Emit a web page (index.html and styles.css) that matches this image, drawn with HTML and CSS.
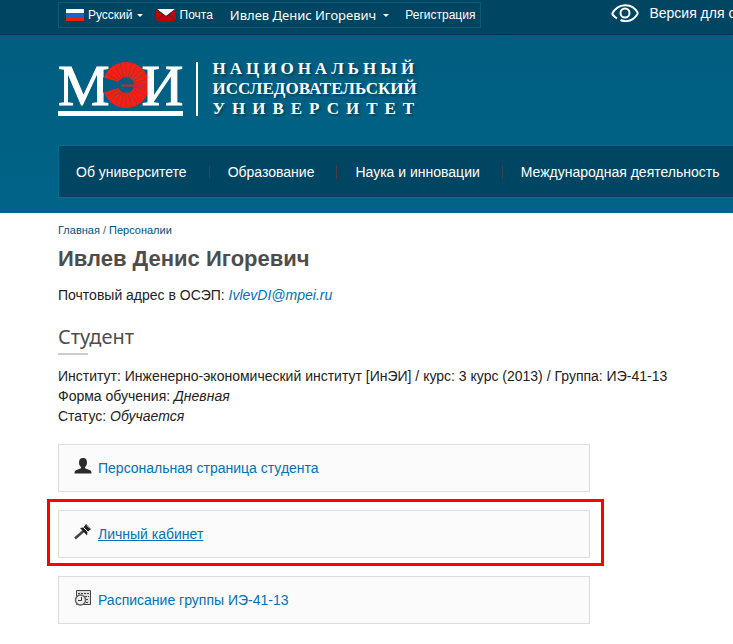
FILE: index.html
```html
<!DOCTYPE html>
<html lang="ru">
<head>
<meta charset="utf-8">
<title>Ивлев Денис Игоревич</title>
<link rel="stylesheet" href="styles.css">
</head>
<body>
<header class="header">
  <div class="topbar">
    <div class="userbar">
      <a class="lang" href="#">
        <svg class="flag" viewBox="0 0 18 12"><path fill="#fff" d="M0 0h18v4H0z"/><path fill="#1565c8" d="M0 4h18v4H0z"/><path fill="#f01c08" d="M0 8h18v4H0z"/></svg>
        Русский
        <svg class="caret" viewBox="0 0 6 3"><path fill="#fff" d="M0 0h6L3 3z"/></svg>
      </a>
      <a class="mail" href="#">
        <svg class="envelope" viewBox="0 0 20 12"><path fill="#c80000" d="M0 0h20v12H0z"/><path fill="#fff" d="M1 0h18l-9 7z"/><path fill="none" stroke="#08405f" d="M0 0l10 7.500L20 0M0 12l7-6M20 12l-7-6"/></svg>
        Почта
      </a>
      <a class="user" href="#">Ивлев Денис Игоревич
        <svg class="caret" viewBox="0 0 6 3"><path fill="#fff" d="M0 0h6L3 3z"/></svg>
      </a>
      <a class="register" href="#">Регистрация</a>
    </div>
    <a class="vision" href="#">
      <svg class="eye" viewBox="0 0 28 18"><g fill="none" stroke="#fff" stroke-width="2"><path d="M1 10C7-1.500 21-1.500 27 9M1 10q2.500 3 5 4.500M27 9C23 17 15 18.500 9.500 16"/><circle cx="14" cy="9" r="4.500"/></g></svg>
      Версия для слабовидящих
    </a>
  </div>
  <a class="brand" href="#">
    <span class="logo">
      <span class="logo-letter">М</span>
      <svg class="disc" viewBox="0 0 46 46" aria-label="Э">
        <circle cx="23" cy="23" r="15.500" fill="none" stroke="#ff1d12" stroke-width="15"/>
        <g stroke="#8a3a44" stroke-width=".8"><path id="ray" d="M23 0v15M23 31v15"/><use href="#ray" transform="rotate(15 23 23)"/><use href="#ray" transform="rotate(30 23 23)"/><use href="#ray" transform="rotate(45 23 23)"/><use href="#ray" transform="rotate(60 23 23)"/><use href="#ray" transform="rotate(75 23 23)"/><use href="#ray" transform="rotate(105 23 23)"/><use href="#ray" transform="rotate(120 23 23)"/><use href="#ray" transform="rotate(135 23 23)"/><use href="#ray" transform="rotate(150 23 23)"/><use href="#ray" transform="rotate(165 23 23)"/></g>
        <path d="M17 20.500L-1 15v16l18-5.500z" fill="#005f82"/>
        <path d="M30 22h16M30 25h16" stroke="#8a3a44"/>
        <path d="M18 23.500h28" stroke="#e02020" stroke-width="2"/>
      </svg>
      <span class="logo-letter">И</span>
    </span>
    <span class="wordmark">
      <span class="word-wide">НАЦИОНАЛЬНЫЙ</span>
      <span>ИССЛЕДОВАТЕЛЬСКИЙ</span>
      <span class="word-widest">УНИВЕРСИТЕТ</span>
    </span>
  </a>
  <nav class="nav">
    <a href="#">Об университете</a>
    <a href="#">Образование</a>
    <a href="#">Наука и инновации</a>
    <a href="#">Международная деятельность</a>
  </nav>
</header>
<main class="content">
  <div class="crumbs"><a href="#">Главная</a> / <a href="#">Персоналии</a></div>
  <h1>Ивлев Денис Игоревич</h1>
  <p>Почтовый адрес в ОСЭП: <a href="#"><em>IvlevDI@mpei.ru</em></a></p>
  <h2>Студент</h2>
  <p>Институт: Инженерно-экономический институт [ИнЭИ] / курс: 3 курс (2013) / Группа: ИЭ-41-13<br>
  Форма обучения: <em>Дневная</em><br>
  Статус: <em>Обучается</em></p>
  <div class="cards">
    <div class="card">
      <svg class="icon" viewBox="0 0 18 18"><path fill="#2b2b2b" d="M9 1c3 0 4 2 4 4.500 0 2-.8 3.500-2 4.500v1.200l5 2c1 .4 1.500 1.500 1.500 3.300H.5c0-1.800.5-2.900 1.500-3.300l5-2V10C5.800 9 5 7.500 5 5.500 5 3 6 1 9 1z"/></svg>
      <a href="#">Персональная страница студента</a>
    </div>
    <div class="card marked">
      <svg class="icon" viewBox="0 0 18 18"><path stroke="#444" stroke-width="2.500" d="M1 15.500L10 7.500"/><path fill="#222" d="M6 5l3.500-.5L12 1l5 5-3.500 3-.5 3.500z"/><path stroke="#fff" d="M9.500 4.500l4.500 4.500"/><path stroke="#888" d="M12.500 2.500l3 3"/></svg>
      <a class="current" href="#">Личный кабинет</a>
    </div>
    <div class="card">
      <svg class="icon" viewBox="0 0 18 18"><path fill="#ddd" stroke="#444" d="M2.500 1.500h14v14h-14z"/><path stroke="#444" stroke-dasharray="2 1" d="M4 4.500h11M11 7.500h4M12 10.500h3M12 13.500h3"/><circle cx="6.500" cy="11" r="5" fill="#eee" stroke="#666" stroke-width="1.500"/><path fill="none" stroke="#333" d="M4 11.500h3.500V8"/></svg>
      <a href="#">Расписание группы ИЭ-41-13</a>
    </div>
  </div>
</main>
</body>
</html>
```
FILE: styles.css
```css
* { box-sizing: border-box; }
body {
  margin: 0;
  background: #fff;
  color: #222;
  font: 14px/20px "Liberation Sans", Arial, sans-serif;
  overflow-x: hidden;
}
a { color: #0071bc; text-decoration: none; }
svg { display: block; flex: none; }

.header {
  padding-left: 58px;
  padding-bottom: 15px;
  background: linear-gradient(#005c7e, #006488);
  overflow: hidden;
}
.topbar {
  display: flex;
  justify-content: space-between;
  gap: 130px;
  height: 35px;
  margin-left: -58px;
  padding: 2px 0 0 58px;
  background: #004562;
  border-bottom: 1px solid #003850;
  white-space: nowrap;
}
.topbar a { display: flex; align-items: center; color: #fff; }
.userbar {
  display: flex;
  height: 26px;
  padding: 0 5px 0 7px;
  border: 1px solid #0b5a76;
  font-size: 12px;
}
.userbar .lang { gap: 4px; margin-right: 13px; }
.userbar .mail { gap: 4px; margin-right: 17px; }
.userbar .user { gap: 7px; margin-right: 16px; font-family: "Noto Sans", sans-serif; font-size: 13px; }
.flag { width: 18px; height: 12px; }
.caret { width: 6px; height: 3px; }
.envelope { width: 20px; height: 12px; }
.topbar .vision { height: 22px; flex: 1; gap: 10px; }
.eye { width: 28px; height: 18px; }

.brand {
  display: flex;
  gap: 13px;
  margin-top: 27px;
  color: #fff;
  font-family: "Liberation Serif", "Times New Roman", serif;
  font-weight: bold;
}
.logo {
  display: flex;
  height: 54px;
  border-bottom: 5px solid #fff;
}
.logo-letter {
  font-size: 58px;
  line-height: 48px;
  font-weight: normal;
  -webkit-text-stroke: 1px #fff;
}
.disc { width: 46px; height: 46px; margin: 0 -7px; }
.wordmark {
  display: flex;
  flex-direction: column;
  justify-content: center;
  height: 54px;
  padding-left: 14px;
  border-left: 2px solid #fff;
  font-size: 17px;
  line-height: 20px;
  text-shadow: 2px 2px 2px #004562;
}
.word-wide { letter-spacing: 4px; }
.word-widest { letter-spacing: 7px; }

.nav {
  display: flex;
  align-items: center;
  height: 53px;
  margin-top: 29px;
  padding-left: 17px;
  background: #004562;
  border: 1px solid #006e8c;
  border-right: 0;
  white-space: nowrap;
}
.nav a { color: #fff; line-height: 14px; }
.nav a + a {
  margin-left: 22px;
  padding-left: 18px;
  border-left: 1px solid #443f4d;
}

.content { padding: 9px 51px 20px 58px; }
.crumbs { font-size: 11px; line-height: 16px; color: #555; }
.crumbs a { color: #004f83; }
h1 { margin: 7px 0 12px; font-size: 22px; line-height: 28px; color: #4d4d4d; }
p { margin: 0; }
h2 {
  margin: 20px 0 11px;
  font: 20px/24px "Noto Sans", sans-serif;
  color: #4d4d4d;
}
h2::after {
  content: "";
  display: block;
  width: 30px;
  height: 2px;
  margin-top: 4px;
  background: #ccc;
}
.cards { display: grid; gap: 18px; max-width: 532px; margin-top: 18px; }
.card {
  position: relative;
  display: flex;
  align-items: center;
  gap: 6px;
  height: 48px;
  padding-left: 15px;
  background: #fbfbfb;
  border: 1px solid #ddd;
}
/* Highlight frame around the card */
.marked::after {
  content: "";
  position: absolute;
  inset: -12px -15px -9px -12px;
  border: 3px solid #f00;
  pointer-events: none;
}
.icon { width: 18px; height: 18px; margin-bottom: 4px; }
.current { text-decoration: underline; }
```
